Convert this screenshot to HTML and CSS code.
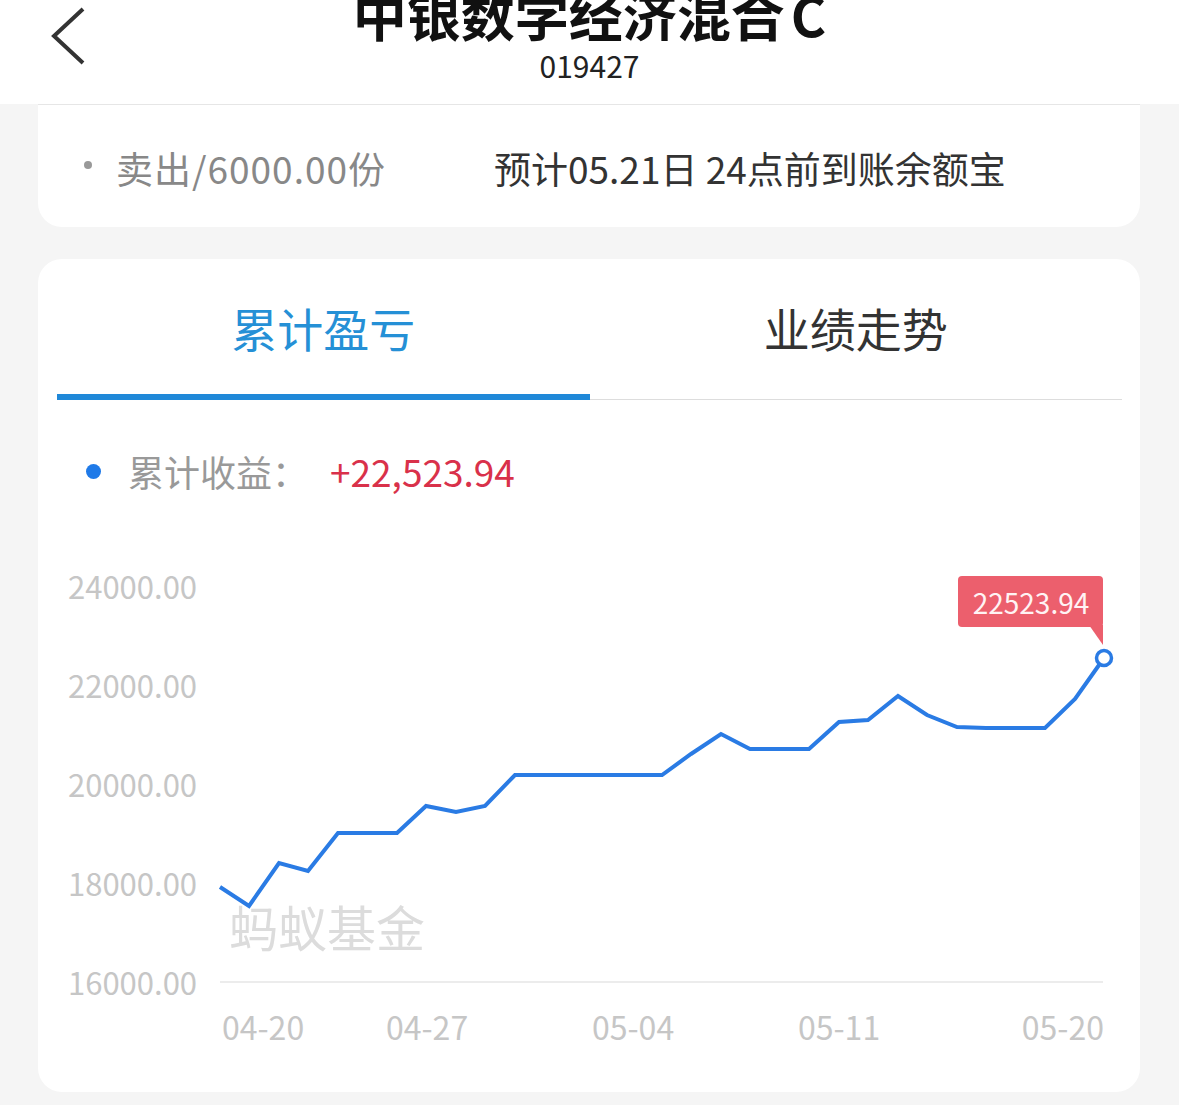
FILE: index.html
```html
<!DOCTYPE html>
<html lang="zh-CN">
<head>
    <meta charset="UTF-8">
    <meta name="viewport" content="width=device-width, initial-scale=1.0">
    <title>中银数学经济混合C</title>
    <link rel="stylesheet" href="styles.css">
</head>
<body>

    <!-- 顶部导航 -->
    <div class="header">
        <svg class="back" width="40" height="60" viewBox="0 0 40 60">
            <polyline points="33,4 4,31 33,58" fill="none" stroke="#333" stroke-width="4" stroke-linejoin="miter"/>
        </svg>
        <div class="title">中银数学经济混合<span class="title-c">C</span></div>
        <div class="code">019427</div>
    </div>

    <!-- 交易记录 -->
    <div class="card trade">
        <span class="dot-gray"></span>
        <span class="trade-name">卖出/6000.00份</span>
        <span class="trade-desc">预计05.21日 24点前到账余额宝</span>
    </div>

    <!-- 图表卡片 -->
    <div class="card chart-card">
        <div class="tabs">
            <div class="tab active">累计盈亏</div>
            <div class="tab">业绩走势</div>
        </div>

        <div class="legend">
            <span class="dot-blue"></span>
            <span class="legend-label">累计收益：</span>
            <span class="legend-value">+22,523.94</span>
        </div>

        <svg class="chart" width="1102" height="560" viewBox="38 520 1102 560">
            <text class="y-label" x="68" y="600">24000.00</text>
            <text class="y-label" x="68" y="699">22000.00</text>
            <text class="y-label" x="68" y="798">20000.00</text>
            <text class="y-label" x="68" y="897">18000.00</text>
            <text class="y-label" x="68" y="996">16000.00</text>

            <line x1="220" y1="983" x2="1103" y2="983" stroke="#e6e6e6" stroke-width="1.5"/>

            <text class="watermark" x="229" y="948">蚂蚁基金</text>

            <text class="x-label" x="222" y="1041">04-20</text>
            <text class="x-label" x="386" y="1041">04-27</text>
            <text class="x-label" x="592" y="1041">05-04</text>
            <text class="x-label" x="798" y="1041">05-11</text>
            <text class="x-label" x="1104" y="1041" text-anchor="end">05-20</text>

            <polyline class="line" points="220,888 249,907 279,864 308,872 338,834 367,834 397,834 426,807 456,813 485,807 515,776 662,776 691,755 721,735 750,750 780,750 809,750 839,723 868,721 898,697 927,716 957,728 986,729 1016,729 1045,729 1075,700 1104,659"/>

            <!-- 提示框 -->
            <rect x="958" y="577" width="145" height="51" rx="4" fill="#ec5f6d"/>
            <polygon points="1089,626 1103,626 1103,646" fill="#ec5f6d"/>
            <text class="tip-text" x="1031" y="615" text-anchor="middle">22523.94</text>

            <circle cx="1104" cy="659" r="7.5" fill="#fff" stroke="#2a7be4" stroke-width="3.5"/>
        </svg>
    </div>

</body>
</html>
```

FILE: styles.css
```css
/* 页面底色 */
body {
    margin: 0;
    background-color: #f5f5f5;
    font-family: "Noto Sans CJK SC", "Noto Sans", sans-serif;
    overflow: hidden;
}

.header {
    position: relative;
    height: 104px;
    background-color: #fff;
    display: flex;
    flex-direction: column;
    align-items: center;
    overflow: hidden;
}

.back {
    position: absolute;
    left: 50px;
    top: 5px;
}

.title {
    font-size: 54px;
    line-height: 52px;
    font-weight: bold;
    color: #111;
    margin-top: -12px;
}

.title-c {
    margin-left: 6px;
}

.code {
    font-size: 30px;
    line-height: 30px;
    color: #222;
    margin-top: 10px;
}

.card {
    background-color: #fff;
    margin: 0 39px 0 38px;
    border-radius: 24px;
}

.trade {
    border-top: 1px solid #e6e6e6;
    border-radius: 0 0 24px 24px;
    height: 123px;
    display: flex;
    align-items: center;
    padding: 3px 0 0 46px;
    box-sizing: border-box;
    font-size: 37px;
}

.dot-gray {
    width: 8px;
    height: 8px;
    border-radius: 50%;
    background-color: #999;
    margin-right: 24px;
    margin-bottom: 6px;
}

.trade-name {
    color: #888;
    letter-spacing: 1px;
}

.trade-desc {
    color: #333;
    margin-left: 108px;
}

.chart-card {
    margin-top: 32px;
    padding-bottom: 13px;
}

.tabs {
    display: flex;
    margin: 0 18px 0 19px;
    border-bottom: 1px solid #dddddd;
}

.tab {
    flex: 1;
    height: 141px;
    margin-bottom: -1px;
    box-sizing: border-box;
    border-bottom: 6px solid transparent;
    display: flex;
    align-items: center;
    justify-content: center;
    font-size: 46px;
    color: #333;
}

.tab.active {
    color: #2590d6;
    border-bottom-color: #1f88d8;
}

.legend {
    display: flex;
    align-items: center;
    height: 50px;
    margin-top: 46px;
    padding-left: 48px;
    font-size: 36px;
}

.dot-blue {
    width: 15px;
    height: 15px;
    border-radius: 50%;
    background-color: #1f7ae8;
    margin-right: 27px;
}

.legend-label {
    color: #999;
}

.legend-value {
    color: #d9314a;
    margin-left: 22px;
    font-size: 37px;
}

.chart {
    display: block;
    margin-top: 23px;
}

.y-label {
    font-size: 31px;
    fill: #c6c6c6;
}

.x-label {
    font-size: 32px;
    fill: #c6c6c6;
}

.watermark {
    font-size: 49px;
    fill: #dcdcdc;
}

.line {
    fill: none;
    stroke: #2a7be4;
    stroke-width: 4;
    stroke-linejoin: miter;
}

.tip-text {
    font-size: 28px;
    fill: #fff3f4;
}
```
